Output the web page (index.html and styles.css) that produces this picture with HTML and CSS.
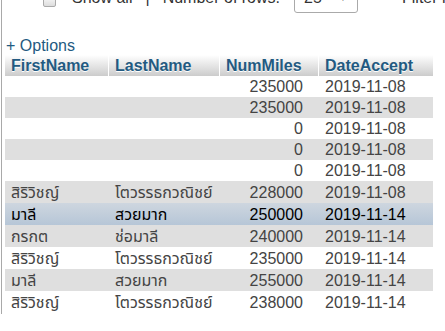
FILE: index.html
```html
<!DOCTYPE html>
<html lang="en">

<head>
    <meta charset="UTF-8">
    <title>Browse - customers</title>
    <link rel="stylesheet" href="styles.css">
</head>

<body>
    <div class="page">
        <div class="nav-row">
            <span class="check"></span>
            <span class="nav-label">Show all</span>
            <span class="sep">|</span>
            <span class="nav-label">Number of rows:</span>
            <span class="select">25 <span class="arrow">&#9660;</span></span>
            <span class="nav-label filter">Filter rows:</span>
        </div>

        <a class="options" href="#">+ Options</a>

        <table class="data">
            <colgroup>
                <col class="c-first">
                <col class="c-last">
                <col class="c-miles">
                <col class="c-date">
            </colgroup>
            <thead>
                <tr>
                    <th>FirstName</th>
                    <th>LastName</th>
                    <th>NumMiles</th>
                    <th>DateAccept</th>
                </tr>
            </thead>
            <tbody>
                <tr><td></td><td></td><td class="num">235000</td><td>2019-11-08</td></tr>
                <tr><td></td><td></td><td class="num">235000</td><td>2019-11-08</td></tr>
                <tr><td></td><td></td><td class="num">0</td><td>2019-11-08</td></tr>
                <tr><td></td><td></td><td class="num">0</td><td>2019-11-08</td></tr>
                <tr><td></td><td></td><td class="num">0</td><td>2019-11-08</td></tr>
                <tr class="th-row"><td>สิริวิชญ์</td><td>โตวรรธกวณิชย์</td><td class="num">228000</td><td>2019-11-08</td></tr>
                <tr class="th-row hover"><td>มาลี</td><td>สวยมาก</td><td class="num">250000</td><td>2019-11-14</td></tr>
                <tr class="th-row"><td>กรกต</td><td>ช่อมาลี</td><td class="num">240000</td><td>2019-11-14</td></tr>
                <tr class="th-row"><td>สิริวิชญ์</td><td>โตวรรธกวณิชย์</td><td class="num">235000</td><td>2019-11-14</td></tr>
                <tr class="th-row"><td>มาลี</td><td>สวยมาก</td><td class="num">255000</td><td>2019-11-14</td></tr>
                <tr class="th-row"><td>สิริวิชญ์</td><td>โตวรรธกวณิชย์</td><td class="num">238000</td><td>2019-11-14</td></tr>
            </tbody>
        </table>
    </div>
</body>

</html>
```

FILE: styles.css
```css
body {
    margin: 0;
    background: #fff;
    font-family: "Liberation Sans", Arial, "Noto Sans Thai", "Noto Sans", sans-serif;
    font-size: 16px;
    color: #444;
    overflow: hidden;
}

.page {
    margin-left: 1px;
    border-left: 1px solid #a9a9a9;
    min-height: 100vh;
    padding-left: 3px;
}

/* navigation bar above the results, partly scrolled away */
.nav-row {
    display: flex;
    align-items: center;
    height: 30px;
    margin-top: -17px;
    padding-left: 38px;
    white-space: nowrap;
    overflow: hidden;
    color: #333;
}

.nav-row > span {
    flex: none;
}

.check {
    box-sizing: border-box;
    width: 13px;
    height: 13px;
    margin-top: 4px;
    border: 1px solid #aaa;
    border-radius: 2px;
    background: linear-gradient(#fff, #ddd);
    margin-right: 16px;
}

.sep {
    margin: 0 13px 0 13px;
}

.select {
    display: inline-flex;
    align-items: center;
    justify-content: space-between;
    box-sizing: border-box;
    width: 64px;
    height: 30px;
    margin-left: 14px;
    padding: 0 10px 0 9px;
    border: 1px solid #aaa;
    border-radius: 3px;
    background: #fff;
}

.arrow {
    font-size: 8px;
}

.filter {
    margin-left: 44px;
}

.options {
    display: block;
    margin-top: 24px;
    margin-left: 1px;
    line-height: 18px;
    color: #235a81;
    text-decoration: none;
}

.data {
    table-layout: fixed;
    width: 428px;
    border-collapse: separate;
    border-spacing: 0;
}

.c-first { width: 104px; }
.c-last { width: 111px; }
.c-miles { width: 99px; }
.c-date { width: 114px; }

.data th {
    box-sizing: border-box;
    height: 21px;
    padding: 0 17px 0 6px;
    text-align: left;
    font-weight: bold;
    color: #235a81;
    text-shadow: 0 1px 0 #fff;
    background: linear-gradient(#fff, #ccc);
    border-right: 1px solid #fff;
    white-space: nowrap;
}

.data th:last-child {
    border-right: 0;
}

.data td {
    box-sizing: border-box;
    height: 21px;
    padding: 0 6px;
    line-height: 19px;
    white-space: nowrap;
}

.data tbody tr:nth-child(even) {
    background: #dfdfdf;
}

.data .th-row td {
    height: 22px;
}

.data td.num {
    text-align: right;
    padding-right: 16px;
}

.data tr.hover {
    background: linear-gradient(#ced6df, #b6c6d7);
    color: #000;
}
```
